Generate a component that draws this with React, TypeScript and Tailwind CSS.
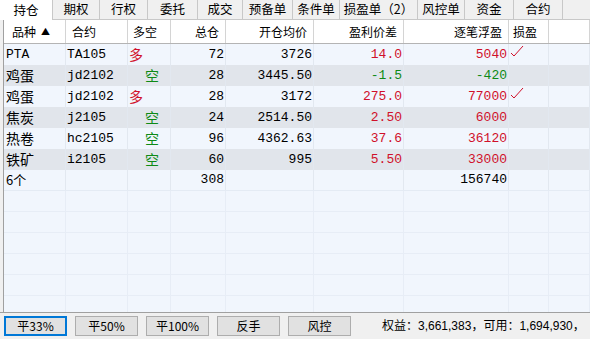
import React from 'react';

const tabs = [
  { label: '持仓', w: 'w-[53px]' },
  { label: '期权', w: 'w-[47px]' },
  { label: '行权', w: 'w-[48px]' },
  { label: '委托', w: 'w-[50px]' },
  { label: '成交', w: 'w-[45px]' },
  { label: '预备单', w: 'w-[50px]' },
  { label: '条件单', w: 'w-[47px]' },
  { label: '损盈单（2）', w: 'w-[78px]' },
  { label: '风控单', w: 'w-[47px]' },
  { label: '资金', w: 'w-[49px]' },
  { label: '合约', w: 'w-[49px]' },
];

// column widths include the 1px right border
const cols = ['w-[62px]', 'w-[62px]', 'w-[43px]', 'w-[55px]', 'w-[88px]', 'w-[90px]', 'w-[105px]', 'w-[40px]', 'flex-1'];

type Row = {
  name: string;
  code: string;
  side: '多' | '空' | '';
  qty: string;
  avg: string;
  diff: string;
  pnl: string;
  up: boolean;
  tick: boolean;
};

const rows: Row[] = [
  { name: 'PTA', code: 'TA105', side: '多', qty: '72', avg: '3726', diff: '14.0', pnl: '5040', up: true, tick: true },
  { name: '鸡蛋', code: 'jd2102', side: '空', qty: '28', avg: '3445.50', diff: '-1.5', pnl: '-420', up: false, tick: false },
  { name: '鸡蛋', code: 'jd2102', side: '多', qty: '28', avg: '3172', diff: '275.0', pnl: '77000', up: true, tick: true },
  { name: '焦炭', code: 'j2105', side: '空', qty: '24', avg: '2514.50', diff: '2.50', pnl: '6000', up: true, tick: false },
  { name: '热卷', code: 'hc2105', side: '空', qty: '96', avg: '4362.63', diff: '37.6', pnl: '36120', up: true, tick: false },
  { name: '铁矿', code: 'i2105', side: '空', qty: '60', avg: '995', diff: '5.50', pnl: '33000', up: true, tick: false },
];

const mono = "font-['Liberation_Mono','Noto_Sans_CJK_SC',monospace]";
const cjk = "font-['Noto_Sans_CJK_SC','Liberation_Sans',sans-serif]";

function Tick() {
  return (
    <svg width="14" height="13" viewBox="0 0 14 13" className="ml-[1px] -mt-[7px]">
      <polyline points="1,8 4,11 13,1" fill="none" stroke="#d0102a" strokeWidth="1" />
    </svg>
  );
}

function Cell({ i, className = '', children }: { i: number; className?: string; children?: React.ReactNode }) {
  return (
    <div className={`${cols[i]} shrink-0 h-full flex items-center border-r border-[#e2e8f0] overflow-hidden whitespace-nowrap ${className}`}>
      {children}
    </div>
  );
}

export default function App() {
  const red = 'text-[#d0102a]';
  const green = 'text-[#0e8a16]';

  return (
    <div className={`w-[590px] h-[339px] flex flex-col bg-[#f0f0f0] overflow-hidden ${cjk} text-[12px] text-black`}>
      {/* tab strip */}
      <div className="h-[20px] flex shrink-0">
        {tabs.map((t, i) => (
          <div
            key={t.label}
            className={`${t.w} shrink-0 flex items-center justify-center border-r border-[#c8c8c8] text-[12.5px] ${
              i === 0 ? 'bg-white' : 'bg-[#f0f0f0] border-b border-b-[#c8c8c8]'
            }`}
          >
            {t.label}
          </div>
        ))}
        <div className="flex-1 border-b border-[#c8c8c8]" />
      </div>

      {/* positions grid */}
      <div className="flex-1 ml-[3px] border-l border-[#a0a0a0] bg-[#f1f6fd] overflow-hidden flex flex-col">
        <div className="h-[24px] shrink-0 flex bg-white border-b border-[#b4b4b4]">
          {['品种', '合约', '多空', '总仓', '开仓均价', '盈利价差', '逐笔浮盈', '损盈', ''].map((h, i) => (
            <div
              key={i}
              className={`${cols[i]} shrink-0 h-full flex items-center border-r border-[#d4d4d4] px-[6px] ${
                i >= 3 && i <= 6 ? 'justify-end' : ''
              } ${i === 0 ? 'pl-[8px]' : ''} ${i === 2 ? 'pl-[5px]' : ''} ${i === 7 ? 'pl-[4px]' : ''}`}
            >
              {h}
              {i === 0 && <span className="ml-[5px] text-[9px]">▲</span>}
            </div>
          ))}
        </div>

        {rows.map((r, idx) => (
          <div
            key={idx}
            className={`h-[21px] shrink-0 flex text-[13px] ${mono} ${idx % 2 === 0 ? 'bg-[#f1f6fd]' : 'bg-[#e1e5eb]'}`}
          >
            <Cell i={0} className={`pl-[2px] ${/[A-Z]/.test(r.name) ? '' : `${cjk} text-[14px]`}`}>{r.name}</Cell>
            <Cell i={1} className="pl-[1px]">{r.code}</Cell>
            <Cell i={2} className={`${cjk} text-[14px] ${r.side === '多' ? `${red} pl-[1px]` : `${green} pl-[17px]`}`}>
              {r.side}
            </Cell>
            <Cell i={3} className="justify-end pr-[1px]">{r.qty}</Cell>
            <Cell i={4} className="justify-end pr-[1px]">{r.avg}</Cell>
            <Cell i={5} className={`justify-end pr-[1px] ${r.up ? red : green}`}>{r.diff}</Cell>
            <Cell i={6} className={`justify-end pr-[1px] ${r.up ? red : green}`}>{r.pnl}</Cell>
            <Cell i={7} className="!overflow-visible">{r.tick && <Tick />}</Cell>
            <Cell i={8} />
          </div>
        ))}

        {/* summary row */}
        <div className={`h-[21px] shrink-0 flex text-[13px] ${mono} bg-[#f1f6fd] border-b border-[#e4ebf4]`}>
          <Cell i={0} className={`pl-[2px] ${cjk}`}>6个</Cell>
          <Cell i={1} />
          <Cell i={2} />
          <Cell i={3} className="justify-end pr-[1px]">308</Cell>
          <Cell i={4} />
          <Cell i={5} />
          <Cell i={6} className="justify-end pr-[1px]">156740</Cell>
          <Cell i={7} />
          <Cell i={8} />
        </div>

        {Array.from({ length: 7 }).map((_, k) => (
          <div key={k} className="h-[21px] shrink-0 flex border-b border-[#e7edf6]">
            {cols.map((_, i) => (
              <Cell key={i} i={i} className="!border-[#e7edf6]" />
            ))}
          </div>
        ))}
      </div>

      {/* action bar */}
      <div className="h-[27px] shrink-0 flex items-center border-t border-[#a0a0a0] bg-[#f0f0f0] pl-[4px]">
        {['平33%', '平50%', '平100%', '反手', '风控'].map((b, i) => (
          <button
            key={b}
            className={`w-[63px] h-[20px] mr-[8px] flex items-center justify-center bg-[#e1e1e1] text-[12px] ${
              i === 0 ? 'border-2 border-[#0078d7]' : 'border border-[#adadad]'
            }`}
          >
            {b}
          </button>
        ))}
        <div className="ml-[23px] whitespace-nowrap font-['Liberation_Sans','Noto_Sans_CJK_SC',sans-serif] text-[12px]">
          权益：3,661,383，可用：1,694,930，
        </div>
      </div>
    </div>
  );
}
